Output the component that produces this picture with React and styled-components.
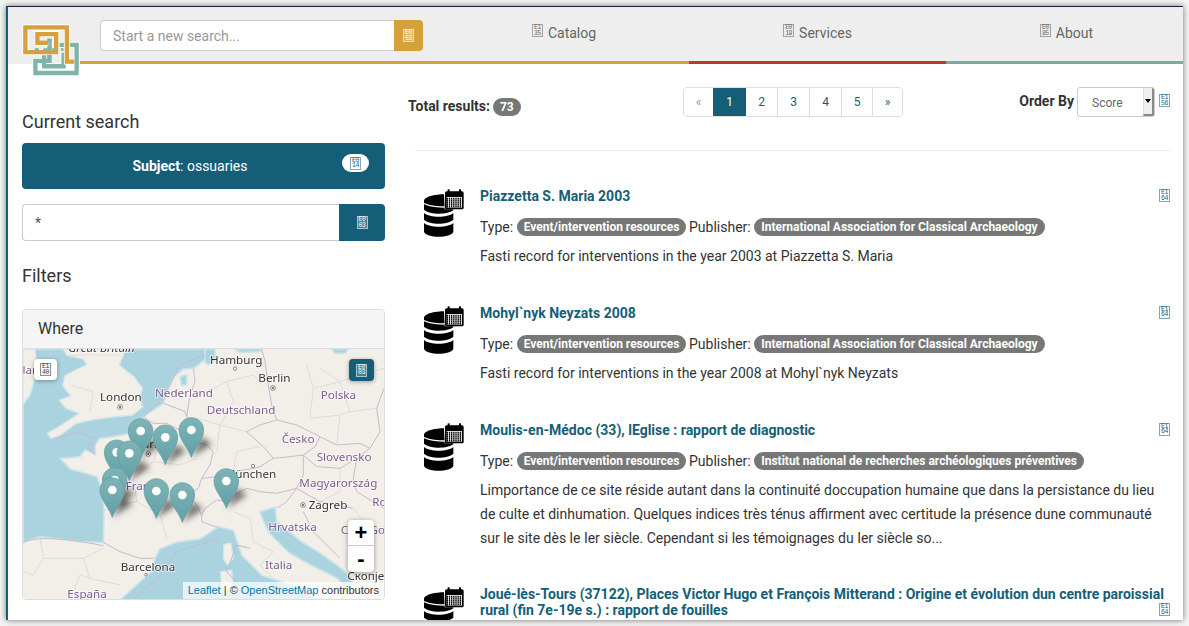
import React from 'react'
import styled, { createGlobalStyle } from 'styled-components'

const TEAL = '#155e78'
const GOLD = '#d6a03b'

const GlobalStyle = createGlobalStyle`
  html, body {
    margin: 0;
    height: 100%;
    overflow: hidden;
    background: #f4f4f4;
  }
  * {
    box-sizing: border-box;
  }
`

const Frame = styled.div`
  position: relative;
  width: 1177px;
  height: 614px;
  margin: 6px 0 0 6px;
  overflow: hidden;
  background: white;
  border-top: 1px solid #2a1a3c;
  border-left: 2px solid ${TEAL};
  box-shadow: 0 0 6px rgba(0, 0, 0, 0.55);
  color: #333;
  font-family: Roboto, sans-serif;
  font-size: 14px;
`

const Header = styled.header`
  display: flex;
  height: 57px;
  background: #eee;
`

const HeaderLogoSlot = styled.div`
  flex: none;
  width: 72px;
`

const SearchSlot = styled.div`
  display: flex;
  flex: none;
  width: 359px;
  padding: 13px 0 0 20px;
  border-bottom: 3px solid ${GOLD};
`

const NavItem = styled.a`
  display: flex;
  flex: ${({ $width }) => `0 0 ${$width}px`};
  justify-content: center;
  gap: 5px;
  padding-top: 17px;
  border-bottom: 3px solid ${({ $color }) => $color};
  color: #666;
  font-size: 14px;
  line-height: 18px;
`

const Logo = styled.svg`
  position: absolute;
  top: 14px;
  left: 12px;
  width: 62px;
  height: 57px;
`

const SearchBox = styled.input`
  width: ${({ $width }) => $width}px;
  height: ${({ $height }) => $height}px;
  padding: 0 12px;
  border: 1px solid #ccc;
  border-right: 0;
  border-radius: 4px 0 0 4px;
  outline: 0;
  background: white;
  color: #555;
  font-family: Roboto, sans-serif;
  font-size: 14px;

  &::placeholder {
    color: #999;
  }
`

const SearchButton = styled.button`
  display: flex;
  align-items: center;
  justify-content: center;
  width: ${({ $width }) => $width}px;
  height: ${({ $height }) => $height}px;
  padding: 0;
  border: 0;
  border-radius: 0 4px 4px 0;
  background: ${({ $color }) => $color};
  color: white;
`

// the page's icon font is missing in the reference, so its icons show as hex boxes
const HexFrame = styled.span`
  display: inline-flex;
  flex: none;
  flex-direction: column;
  align-items: center;
  justify-content: center;
  width: 11px;
  height: 13px;
  border: 1px solid color-mix(in srgb, currentColor 55%, transparent);
  background: ${({ $filled }) => ($filled ? 'rgba(255, 255, 255, 0.2)' : 'transparent')};
  font-family: 'Liberation Mono', monospace;
  font-size: 6.5px;
  font-weight: 400;
  font-style: normal;
  line-height: 5.5px;
  letter-spacing: -0.5px;
`

const HexBox = ({ code, filled }) => (
  <HexFrame $filled={filled}>
    <span>{code.slice(0, 2)}</span>
    <span>{code.slice(2)}</span>
  </HexFrame>
)

const Columns = styled.div`
  display: flex;
`

const Sidebar = styled.aside`
  flex: 0 0 377px;
  padding: 48px 0 0 14px;
`

const Heading = styled.h3`
  margin: 0;
  color: #333;
  font-size: 18px;
  font-weight: 400;
  line-height: 20px;
`

const ActiveFacet = styled.div`
  position: relative;
  height: 46px;
  margin: 11px 0 15px;
  padding-right: 27px;
  border-radius: 4px;
  background: ${TEAL};
  color: white;
  line-height: 46px;
  text-align: center;

  b {
    font-weight: 700;
  }
`

const FacetPill = styled.span`
  position: absolute;
  top: 11px;
  right: 16px;
  display: flex;
  align-items: center;
  justify-content: center;
  width: 27px;
  height: 18px;
  border-radius: 9px;
  background: white;
  color: ${TEAL};
`

const FacetSearch = styled.div`
  display: flex;
  margin-bottom: 25px;
`

const Panel = styled.section`
  height: 291px;
  margin-top: 23px;
  overflow: hidden;
  border: 1px solid #ddd;
  border-radius: 4px;
`

const PanelHeading = styled.div`
  height: 39px;
  padding-left: 15px;
  border-bottom: 1px solid #ddd;
  background: #f5f5f5;
  font-size: 16px;
  line-height: 37px;
`

const MapBox = styled.div`
  position: relative;
  height: 251px;
  overflow: hidden;
  background: #f2efe9;
`

const MapDrawing = styled.svg`
  display: block;
  width: 361px;
  height: 251px;
`

const Place = styled.text`
  fill: ${({ $kind }) => ($kind === 'country' ? '#7b5a8a' : '#333')};
  stroke: rgba(255, 255, 255, 0.75);
  stroke-width: 5px;
  paint-order: stroke;
  font-family: 'Noto Sans', sans-serif;
  font-size: 35px;
  font-style: ${({ $italic }) => ($italic ? 'italic' : 'normal')};
`

const MapButton = styled.button`
  position: absolute;
  top: ${({ $top }) => $top}px;
  ${({ $side }) => $side}: ${({ $inset }) => $inset}px;
  display: flex;
  align-items: center;
  justify-content: center;
  width: ${({ $width }) => $width}px;
  height: ${({ $height }) => $height}px;
  padding: 0;
  border: 0;
  border-radius: 4px;
  background: ${({ $color }) => $color};
  box-shadow: 0 1px 4px rgba(0, 0, 0, 0.35);
  color: ${({ $ink }) => $ink};
`

const ZoomControl = styled.div`
  position: absolute;
  top: 171px;
  right: 10px;
  width: 26px;
  overflow: hidden;
  border-radius: 4px;
  background: white;
  box-shadow: 0 1px 5px rgba(0, 0, 0, 0.4);
`

const ZoomButton = styled.div`
  height: 26px;
  border-bottom: ${({ $last }) => ($last ? '0' : '1px solid #ccc')};
  color: black;
  font-family: 'Liberation Sans', sans-serif;
  font-size: 22px;
  font-weight: 700;
  line-height: 26px;
  text-align: center;
`

const Attribution = styled.div`
  position: absolute;
  right: 0;
  bottom: 0;
  height: 18px;
  padding: 0 5px;
  background: rgba(255, 255, 255, 0.7);
  color: #333;
  font-family: 'Liberation Sans', sans-serif;
  font-size: 11px;
  line-height: 17px;

  a {
    color: #0078a8;
  }
`

const Main = styled.main`
  flex: 1;
  min-width: 0;
  padding: 23px 13px 0 23px;
`

const Toolbar = styled.div`
  display: grid;
  grid-template-columns: 275px auto 1fr;
  height: 63px;
`

const Rule = styled.hr`
  height: 1px;
  margin: 0 0 37px 7px;
  border: 0;
  background: #eee;
`

const Total = styled.div`
  display: flex;
  align-items: flex-start;
  gap: 3px;
  height: 18px;
  margin-top: 11px;
  font-weight: 700;
  line-height: 16px;
`

const CountBadge = styled.span`
  height: 18px;
  padding: 0 7px;
  border-radius: 9px;
  background: #777;
  color: white;
  font-size: 12px;
  line-height: 19px;
`

const Pagination = styled.nav`
  display: flex;
  height: 30px;
  border: 1px solid #ddd;
  border-radius: 4px;
  overflow: hidden;
`

const PageLink = styled.a`
  width: ${({ $width }) => $width}px;
  border-left: ${({ $first }) => ($first ? '0' : '1px solid #ddd')};
  background: ${({ $active }) => ($active ? TEAL : 'white')};
  color: ${({ $active, $muted }) => ($active ? 'white' : $muted ? '#999' : TEAL)};
  font-size: 12px;
  line-height: 29px;
  text-align: center;
`

const OrderBy = styled.div`
  display: flex;
  justify-content: flex-end;
  height: 30px;
  font-weight: 700;
`

const OrderLabel = styled.span`
  margin-right: 3px;
  line-height: 28px;
`

const SelectBox = styled.div`
  display: flex;
  width: 78px;
  height: 30px;
  overflow: hidden;
  border: 1px solid #ccc;
  border-radius: 3px;
  color: #666;
  font-size: 12px;
  font-weight: 400;
  line-height: 30px;
`

const SelectValue = styled.span`
  flex: 1;
  padding-left: 14px;
`

const SelectArrow = styled.span`
  display: flex;
  align-items: center;
  justify-content: center;
  width: 11px;
  border-left: 1px solid #ddd;
  border-right: 2px solid #888;
  border-bottom: 2px solid #888;
  background: #efefef;

  &::after {
    content: '';
    border-top: 4px solid black;
    border-right: 3px solid transparent;
    border-left: 3px solid transparent;
  }
`

const OrderGlyph = styled.span`
  display: flex;
  margin: 7px 0 0 4px;
  color: ${TEAL};
`

const Result = styled.article`
  display: flex;
  margin-bottom: 35.9px;
`

const ResultIcon = styled.svg`
  flex: 0 0 40px;
  width: 40px;
  height: 49px;
  margin: 1px 16px 0 16px;
`

const ResultBody = styled.div`
  flex: 1;
  min-width: 0;
`

const Title = styled.h4`
  margin: 0 0 11px;
  color: ${TEAL};
  font-size: 14px;
  font-weight: 700;
  line-height: 16px;
`

const TitleGlyph = styled.span`
  float: right;
  display: flex;
  margin-top: 1px;
`

const Meta = styled.div`
  height: 24px;
  margin-bottom: 6.4px;
  line-height: 24px;
`

const Tag = styled.span`
  display: inline-block;
  height: 18px;
  margin: 0 2.5px 0 3.5px;
  padding: 0 7px;
  border-radius: 9px;
  background: #777;
  color: white;
  font-size: 12px;
  font-weight: 700;
  line-height: 18px;
  vertical-align: 1px;
`

const Description = styled.p`
  margin: 0;
  line-height: 23.7px;
`

const places = [
  { name: 'Great Britain', x: 145, y: 22, italic: true },
  { name: 'Ireland', x: -38, y: 88, kind: 'country' },
  { name: 'Hamburg', x: 570, y: 58 },
  { name: 'Berlin', x: 715, y: 110 },
  { name: 'London', x: 240, y: 167 },
  { name: 'Nederland', x: 405, y: 157, kind: 'country' },
  { name: 'Deutschland', x: 560, y: 206, kind: 'country' },
  { name: 'Polska', x: 902, y: 163, kind: 'country' },
  { name: 'Česko', x: 785, y: 293, kind: 'country' },
  { name: 'Slovensko', x: 890, y: 348, kind: 'country' },
  { name: 'Paris', x: 347, y: 308 },
  { name: 'France', x: 317, y: 434, kind: 'country' },
  { name: 'München', x: 614, y: 400 },
  { name: 'Magyarország', x: 838, y: 425, kind: 'country' },
  { name: 'Zagreb', x: 866, y: 493 },
  { name: 'România', x: 1057, y: 484, kind: 'country' },
  { name: 'Hrvatska', x: 745, y: 559, kind: 'country' },
  { name: 'Crna Gora', x: 962, y: 568, kind: 'country' },
  { name: 'Italia', x: 735, y: 672, kind: 'country' },
  { name: 'Barcelona', x: 302, y: 677 },
  { name: 'España', x: 142, y: 760, kind: 'country' },
  { name: 'Скопје', x: 982, y: 705 }
]

const cities = [
  [300, 186, 7], [759, 129, 7], [385, 327, 7], [645, 71, 5], [699, 363, 5], [849, 480, 7], [378, 689, 4]
]

const markers = [
  [514, 255], [362, 258], [436, 277], [290, 322], [328, 325], [619, 408],
  [284, 405], [277, 435], [409, 438], [487, 450]
]

const water = [
  'M9 12 H570 L560 40 L520 70 L490 72 L462 95 L445 130 L430 175 L400 195 L370 215 L350 240 L330 265 L280 275 L240 280 L225 300 L226 328 L195 315 L180 335 L120 340 L150 372 L230 395 L245 430 L252 500 L250 592 L180 590 L60 575 L9 592 Z',
  'M300 765 L350 720 L395 680 L405 640 L420 612 L470 592 L540 582 L595 546 L640 556 L665 631 L725 691 L785 711 L900 765 Z',
  'M720 501 L765 486 L770 531 L845 591 L895 621 L965 671 L1000 705 L975 735 L955 701 L855 651 L805 621 L745 561 Z',
  'M555 12 H585 V45 L565 60 L555 50 Z',
  'M645 12 H725 L720 20 L660 22 Z',
  'M935 12 H985 L975 25 L945 25 Z',
  'M480 95 L500 90 L500 118 L485 122 Z'
]

const lands = [
  'M130 12 L140 32 L190 42 L200 60 L172 72 L135 92 L128 122 L140 138 L152 152 L118 166 L138 190 L178 205 L128 238 L82 265 L92 280 L118 272 L168 236 L208 226 L278 216 L338 210 L368 186 L358 160 L368 130 L342 95 L316 75 L298 60 L318 12 Z',
  'M9 12 H45 L50 60 L42 110 L30 150 L9 180 Z',
  'M612 598 L632 594 L640 640 L622 660 L610 640 Z',
  'M602 680 L635 676 L640 735 L605 738 Z'
]

const borders = [
  'M370 215 L400 235 L440 235 L480 255 L530 290 L560 300 L580 320 L570 360 L545 400 L535 430 L505 450 L530 480 L545 510 L545 530 L585 545 L595 546',
  'M430 175 L470 190 L495 200 L500 215 L510 250 L530 290',
  'M520 70 L525 110 L510 150 L500 215',
  'M725 12 L735 50 L745 120 L755 180 L770 225 L720 240 L680 260 L730 305 L760 340 L720 365 L700 370 L640 380 L590 395 L545 400',
  'M770 225 L830 240 L880 265 L900 275 L885 305 L850 330 L810 335 L760 340',
  'M900 275 L950 300 L1020 295 L1050 310 L1080 260 L1070 190 L1092 130',
  'M850 330 L890 365 L960 370 L1010 340 L1050 310',
  'M850 330 L850 390 L830 430 L770 445 L720 440 L680 430 L650 445 L630 470 L590 465 L555 490 L545 510',
  'M590 395 L600 430 L650 445',
  'M830 430 L800 470 L770 490',
  'M830 430 L900 470 L950 480 L1000 490',
  'M850 500 L880 560 L960 640',
  'M1010 340 L1000 400 L1010 440 L1092 490',
  'M250 592 L300 620 L360 640 L400 640',
  'M9 592 C60 568 180 588 250 602',
  'M110 280 L170 262 L225 280',
  'M225 300 C205 280 195 310 225 328',
  'M370 215 L420 170 L445 130 L480 60 L555 30',
  'M340 765 L420 690 L470 620 L600 580',
  'M700 765 L620 680 L650 600 L690 610'
]

const regions = [
  'M245 500 L300 480 L350 470 L420 510 L440 580',
  'M420 510 L470 470 L505 450',
  'M350 470 L340 400 L400 350 L480 360 L530 340',
  'M400 350 L420 290 L470 255',
  'M60 575 L70 640 L40 690 L9 680',
  'M70 640 L190 640 L250 610',
  'M190 640 L210 700 L300 720',
  'M150 765 L180 690 L210 700',
  'M560 140 L620 110 L700 90 L725 120',
  'M530 220 L600 240 L680 260',
  'M620 110 L640 170 L600 240 L590 320',
  'M640 380 L650 320 L720 305',
  'M900 70 L960 110 L1030 90 L1092 70',
  'M860 60 L880 130 L960 110 L990 200 L1070 190',
  'M880 130 L870 220 L960 210 L990 200',
  'M960 210 L950 300',
  'M640 500 L690 520 L700 590 L760 620',
  'M760 620 L720 660 L760 700',
  'M960 370 L960 440 L900 470',
  'M1000 490 L1040 540 L1092 560',
  'M140 32 L200 30 L300 30',
  'M150 120 L220 140 L210 200'
]

const resultItems = [
  {
    title: 'Piazzetta S. Maria 2003',
    publisher: 'International Association for Classical Archaeology',
    text: 'Fasti record for interventions in the year 2003 at Piazzetta S. Maria'
  },
  {
    title: 'Mohyl`nyk Neyzats 2008',
    publisher: 'International Association for Classical Archaeology',
    text: 'Fasti record for interventions in the year 2008 at Mohyl`nyk Neyzats'
  },
  {
    title: 'Moulis-en-Médoc (33), lEglise : rapport de diagnostic',
    publisher: 'Institut national de recherches archéologiques préventives',
    text: 'Limportance de ce site réside autant dans la continuité doccupation humaine que dans la persistance du lieu de culte et dinhumation. Quelques indices très ténus affirment avec certitude la présence dune communauté sur le site dès le Ier siècle. Cependant si les témoignages du Ier siècle so...'
  },
  {
    title: 'Joué-lès-Tours (37122), Places Victor Hugo et François Mitterand : Origine et évolution dun centre paroissial rural (fin 7e-19e s.) : rapport de fouilles',
    publisher: 'Institut national de recherches archéologiques préventives',
    text: ''
  }
]

const DatasetIcon = () => (
  <ResultIcon viewBox="42 58 120 147">
    <path fill="black" d="M42 92 C46 80 78 74 102 74 L104 119 L130 119 L130 122 C112 136 60 136 42 120 Z" />
    <path fill="white" d="M42 100 C60 108 85 110 104 110 L104 114 C85 114 60 112 42 104 Z" />
    <path fill="black" d="M42 130 C60 145 112 145 130 130 L130 150 C112 166 60 166 42 150 Z" />
    <path fill="black" d="M42 160 C60 175 112 175 130 160 L130 186 C124 206 48 206 42 186 Z" />
    <rect x="105" y="65" width="56" height="54" rx="5" fill="black" />
    <rect x="113" y="59" width="6" height="10" fill="black" />
    <rect x="147" y="59" width="6" height="10" fill="black" />
    <rect x="110" y="82" width="46" height="32" fill="white" />
    <path stroke="black" strokeWidth="5" strokeDasharray="4 2.5" fill="none" d="M110 87 H156 M110 93 H156 M110 99 H156 M110 105 H156 M110 111 H156" />
  </ResultIcon>
)

const MapArt = () => (
  <MapDrawing viewBox="9 12 1083 753">
    <defs>
      <linearGradient id="pin" x1="0" y1="0" x2="0" y2="1">
        <stop offset="0" stopColor="#7fb3b6" />
        <stop offset="1" stopColor="#5fa1a8" />
      </linearGradient>
      <filter id="soft" x="-50%" y="-50%" width="200%" height="200%">
        <feGaussianBlur stdDeviation="9" />
      </filter>
      <filter id="tile" x="0" y="0" width="100%" height="100%">
        <feGaussianBlur stdDeviation="0.9" />
      </filter>
    </defs>
    <g filter="url(#tile)">
      <rect x="9" y="12" width="1083" height="753" fill="#f2efe9" />
      {water.map((d) => (
        <path key={d} d={d} fill="#aad3df" stroke="#c9e3ea" strokeWidth="5" />
      ))}
      {lands.map((d) => (
        <path key={d} d={d} fill="#f2efe9" stroke="#d3e6ea" strokeWidth="4" />
      ))}
      {regions.map((d) => (
        <path key={d} d={d} fill="none" stroke="#ddd4e0" strokeWidth="2.5" />
      ))}
      {borders.map((d) => (
        <path key={d} d={d} fill="none" stroke="#c9b9d0" strokeWidth="3" />
      ))}
      {places.map((place) => (
        <Place key={place.name} x={place.x} y={place.y} $kind={place.kind} $italic={place.italic}>
          {place.name}
        </Place>
      ))}
      {cities.map(([x, y, r]) => (
        <g key={x}>
          <circle cx={x} cy={y} r={r} fill="white" stroke="#555" strokeWidth="2" />
          {r > 5 && <circle cx={x} cy={y} r="3" fill="#555" />}
        </g>
      ))}
    </g>
    {markers.map(([x, y]) => (
      <path
        key={`shadow-${x}`}
        d={`M${x} ${y + 82} L${x + 30} ${y + 20} L${x + 62} ${y + 42} Z`}
        fill="rgba(0,0,0,0.55)"
        filter="url(#soft)"
      />
    ))}
    {markers.map(([x, y]) => (
      <g key={`${x}-${y}`} transform={`translate(${x} ${y})`}>
        <path
          d="M0 82 C-8 55 -37 30 -37 0 C-37 -21 -20 -37 0 -37 C20 -37 37 -21 37 0 C37 30 8 55 0 82 Z"
          fill="url(#pin)"
          stroke="#5d9ba1"
          strokeWidth="2"
        />
        <circle r="13" fill="white" />
      </g>
    ))}
  </MapDrawing>
)

const GOLD_SPIRAL = 'M222 186 H200 V84 H76 V158 H168 V104 H112 V130 H145'
const TEAL_SPIRAL = 'M148 118 V184 H106 V220 H229 V136 H178 M132 150 V200 H190 V160'

export default function App () {
  return (
    <>
      <GlobalStyle />
      <Frame>
        <Header>
          <HeaderLogoSlot />
          <SearchSlot>
            <SearchBox $width={294} $height={31} placeholder="Start a new search..." />
            <SearchButton $width={29} $height={31} $color={GOLD}><HexBox code="E003" filled /></SearchButton>
          </SearchSlot>
          <NavItem $width={250} $color={GOLD}><HexBox code="E135" />Catalog</NavItem>
          <NavItem $width={257} $color="#bc3a24"><HexBox code="E019" />Services</NavItem>
          <NavItem $width={241} $color="#7aaa9c"><HexBox code="E085" />About</NavItem>
        </Header>
        <Logo viewBox="60 65 185 170">
          <path d={TEAL_SPIRAL} fill="none" stroke="white" strokeWidth="18" />
          <path d={TEAL_SPIRAL} fill="none" stroke="#7fb5a9" strokeWidth="13" />
          <path d={GOLD_SPIRAL} fill="none" stroke="white" strokeWidth="18" />
          <path d={GOLD_SPIRAL} fill="none" stroke={GOLD} strokeWidth="13" />
          <path d="M148 118 V184" fill="none" stroke="#7fb5a9" strokeWidth="13" strokeDasharray="10 14" />
          <path d="M104 150 H190" fill="none" stroke="#7fb5a9" strokeWidth="8" strokeDasharray="12 14" />
        </Logo>
        <Columns>
          <Sidebar>
            <Heading>Current search</Heading>
            <ActiveFacet>
              <b>Subject</b>: ossuaries
              <FacetPill><HexBox code="E014" /></FacetPill>
            </ActiveFacet>
            <FacetSearch>
              <SearchBox $width={317} $height={37} defaultValue="*" />
              <SearchButton $width={46} $height={37} $color={TEAL}><HexBox code="E003" filled /></SearchButton>
            </FacetSearch>
            <Heading>Filters</Heading>
            <Panel>
              <PanelHeading>Where</PanelHeading>
              <MapBox>
                <MapArt />
                <MapButton $top={10} $side="left" $inset={11} $width={23} $height={21} $color="white" $ink="#333"><HexBox code="E140" /></MapButton>
                <MapButton $top={10} $side="right" $inset={10} $width={25} $height={22} $color={TEAL} $ink="white"><HexBox code="E003" filled /></MapButton>
                <ZoomControl>
                  <ZoomButton>+</ZoomButton>
                  <ZoomButton $last>-</ZoomButton>
                </ZoomControl>
                <Attribution><a>Leaflet</a> | © <a>OpenStreetMap</a> contributors</Attribution>
              </MapBox>
            </Panel>
          </Sidebar>
          <Main>
            <Toolbar>
              <Total>Total results: <CountBadge>73</CountBadge></Total>
              <Pagination>
                <PageLink $first $muted $width={29}>«</PageLink>
                <PageLink $first $active $width={33}>1</PageLink>
                <PageLink $first $width={31}>2</PageLink>
                <PageLink $width={32}>3</PageLink>
                <PageLink $width={32}>4</PageLink>
                <PageLink $width={31}>5</PageLink>
                <PageLink $width={30}>»</PageLink>
              </Pagination>
              <OrderBy>
                <OrderLabel>Order By</OrderLabel>
                <SelectBox>
                  <SelectValue>Score</SelectValue>
                  <SelectArrow />
                </SelectBox>
                <OrderGlyph><HexBox code="E156" /></OrderGlyph>
              </OrderBy>
            </Toolbar>
            <Rule />
            {resultItems.map((item) => (
              <Result key={item.title}>
                <DatasetIcon />
                <ResultBody>
                  <Title>{item.title}<TitleGlyph><HexBox code="E164" /></TitleGlyph></Title>
                  <Meta>Type:<Tag>Event/intervention resources</Tag>Publisher:<Tag>{item.publisher}</Tag></Meta>
                  <Description>{item.text}</Description>
                </ResultBody>
              </Result>
            ))}
          </Main>
        </Columns>
      </Frame>
    </>
  )
}
